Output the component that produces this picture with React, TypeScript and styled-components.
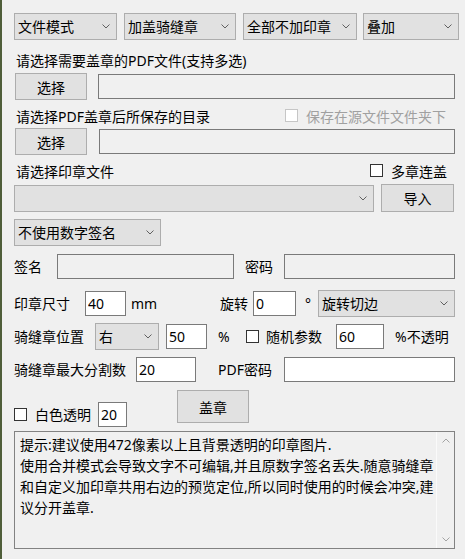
import React from 'react';
import styled, { createGlobalStyle } from 'styled-components';

const GlobalStyle = createGlobalStyle`
  html, body {
    margin: 0;
    padding: 0;
    background: #f0f0f0;
  }
  body {
    font-family: 'Noto Sans', 'Noto Sans CJK SC', sans-serif;
    font-size: 14px;
    color: #000;
  }
`;

const Page = styled.div`
  box-sizing: border-box;
  width: 465px;
  height: 559px;
  border-left: 2px solid #4f5e3a;
  padding: 13px 10px 0 12px;
  display: flex;
  flex-direction: column;
  overflow: hidden;
`;

const Row = styled.div<{ $mt: number; $h: number; $align?: string }>`
  display: flex;
  align-items: ${(p) => p.$align || 'center'};
  margin-top: ${(p) => p.$mt}px;
  height: ${(p) => p.$h}px;
  flex: none;
`;

const SplitRow = styled(Row)`
  justify-content: space-between;
`;

const Group = styled.div<{ $mr?: number; $mt?: number }>`
  display: flex;
  align-items: center;
  margin-right: ${(p) => p.$mr || 0}px;
  margin-top: ${(p) => p.$mt || 0}px;
`;

const Label = styled.span<{ $w?: number; $ml?: number; $muted?: boolean }>`
  flex: none;
  width: ${(p) => (p.$w ? `${p.$w}px` : 'auto')};
  margin-left: ${(p) => p.$ml || 0}px;
  line-height: 20px;
  white-space: nowrap;
  color: ${(p) => (p.$muted ? '#a0a0a0' : '#000')};
`;

const Combo = styled.div<{ $w: number; $ml?: number }>`
  box-sizing: border-box;
  flex: none;
  width: ${(p) => p.$w}px;
  height: 27px;
  margin-left: ${(p) => p.$ml || 0}px;
  padding: 0 6px 0 3px;
  background: #e1e1e1;
  border: 1px solid #adadad;
  display: flex;
  align-items: center;
  justify-content: space-between;
  white-space: nowrap;
  line-height: 20px;
`;

const Button = styled.button<{ $w: number; $h: number; $ml?: number; $self?: string }>`
  box-sizing: border-box;
  flex: none;
  width: ${(p) => p.$w}px;
  height: ${(p) => p.$h}px;
  margin-left: ${(p) => p.$ml || 0}px;
  align-self: ${(p) => p.$self || 'auto'};
  padding: 0;
  background: #e1e1e1;
  border: 1px solid #adadad;
  border-radius: 0;
  font: inherit;
  color: #000;
`;

const Field = styled.input<{ $w: number; $ml?: number; $ro?: boolean }>`
  box-sizing: border-box;
  flex: none;
  width: ${(p) => p.$w}px;
  height: 25px;
  margin: 0 0 0 ${(p) => p.$ml || 0}px;
  padding: 0 0 0 2px;
  background: ${(p) => (p.$ro ? '#f0f0f0' : '#fff')};
  border: 1px solid #7a7a7a;
  border-radius: 0;
  font: inherit;
  color: #000;
  outline: none;
`;

const Check = styled.span<{ $disabled?: boolean; $ml?: number; $dy?: number }>`
  box-sizing: border-box;
  flex: none;
  width: 13px;
  height: 13px;
  margin-left: ${(p) => p.$ml || 0}px;
  position: relative;
  top: ${(p) => p.$dy || 0}px;
  background: #fff;
  border: 1px solid ${(p) => (p.$disabled ? '#c6c6c6' : '#333')};
`;

const Memo = styled.div`
  box-sizing: border-box;
  flex: none;
  margin-top: 3px;
  height: 118px;
  border: 1px solid #828282;
  display: flex;
`;

const MemoText = styled.div`
  flex: 1;
  padding: 2px 0 0 5px;
  line-height: 21px;
  white-space: nowrap;
  overflow: hidden;
`;

const ScrollBar = styled.div`
  width: 17px;
  flex: none;
  border-left: 1px solid #fafafa;
  display: flex;
  flex-direction: column;
  justify-content: space-between;
`;

const ScrollArrow = styled.div`
  height: 17px;
  display: flex;
  align-items: center;
  justify-content: center;
`;

const Chevron = ({ up, color = '#606060' }: { up?: boolean; color?: string }) => (
  <svg width="8" height="5" viewBox="0 0 8 5">
    <polyline
      points={up ? '0.5,4.5 4,1 7.5,4.5' : '0.5,0.5 4,4 7.5,0.5'}
      fill="none"
      stroke={color}
      strokeWidth="1"
    />
  </svg>
);

const Select = ({ w, ml, text }: { w: number; ml?: number; text?: string }) => (
  <Combo $w={w} $ml={ml}>
    <span>{text}</span>
    <Chevron />
  </Combo>
);

export default function App() {
  return (
    <>
      <GlobalStyle />
      <Page>
        <Row $mt={0} $h={27}>
          <Select w={103} text="文件模式" />
          <Select w={112} ml={7} text="加盖骑缝章" />
          <Select w={114} ml={7} text="全部不加印章" />
          <Select w={96} ml={6} text="叠加" />
        </Row>

        <Row $mt={11} $h={20}>
          <Label $ml={2}>请选择需要盖章的PDF文件(支持多选)</Label>
        </Row>
        <Row $mt={2} $h={27}>
          <Button $w={72} $h={27} $ml={1}>选择</Button>
          <Field $w={357} $ml={11} $ro readOnly />
        </Row>

        <SplitRow $mt={7} $h={20}>
          <Label $ml={2}>请选择PDF盖章后所保存的目录</Label>
          <Group $mr={9}>
            <Check $disabled $dy={-2} />
            <Label $ml={8} $muted>保存在源文件文件夹下</Label>
          </Group>
        </SplitRow>
        <Row $mt={1} $h={27}>
          <Button $w={72} $h={27} $ml={1}>选择</Button>
          <Field $w={356} $ml={12} $ro readOnly />
        </Row>

        <SplitRow $mt={7} $h={20}>
          <Label $ml={2}>请选择印章文件</Label>
          <Group $mr={8}>
            <Check $dy={-2} />
            <Label $ml={8}>多章连盖</Label>
          </Group>
        </SplitRow>
        <Row $mt={2} $h={28} $align="flex-end">
          <Select w={360} />
          <Button $w={73} $h={28} $ml={7}>导入</Button>
        </Row>

        <Row $mt={7} $h={27}>
          <Select w={147} text="不使用数字签名" />
        </Row>

        <Row $mt={7} $h={27}>
          <Label $w={43}>签名</Label>
          <Field $w={177} $ro readOnly />
          <Label $w={39} $ml={11}>密码</Label>
          <Field $w={171} $ro readOnly />
        </Row>

        <Row $mt={10} $h={27}>
          <Label $w={71}>印章尺寸</Label>
          <Field $w={41} defaultValue="40" readOnly />
          <Label $w={89} $ml={5}>mm</Label>
          <Label $w={33}>旋转</Label>
          <Field $w={43} defaultValue="0" readOnly />
          <Label $w={13} $ml={9}>°</Label>
          <Select w={137} text="旋转切边" />
        </Row>

        <Row $mt={6} $h={27}>
          <Label $w={81}>骑缝章位置</Label>
          <Select w={64} text="右" />
          <Field $w={41} $ml={7} defaultValue="50" readOnly />
          <Label $w={28} $ml={11}>%</Label>
          <Check />
          <Label $w={70} $ml={7}>随机参数</Label>
          <Field $w={48} defaultValue="60" readOnly />
          <Label $ml={11}>%不透明</Label>
        </Row>

        <Row $mt={6} $h={27}>
          <Label $w={122}>骑缝章最大分割数</Label>
          <Field $w={60} defaultValue="20" readOnly />
          <Label $w={66} $ml={22}>PDF密码</Label>
          <Field $w={171} readOnly />
        </Row>

        <Row $mt={7} $h={38} $align="flex-start">
          <Group $mt={12}>
            <Check />
            <Label $w={63} $ml={8}>白色透明</Label>
            <Field $w={29} defaultValue="20" readOnly />
          </Group>
          <Button $w={72} $h={33} $ml={50}>盖章</Button>
        </Row>

        <Memo>
          <MemoText>
            提示:建议使用472像素以上且背景透明的印章图片.
            <br />
            使用合并模式会导致文字不可编辑,并且原数字签名丢失.随意骑缝章
            <br />
            和自定义加印章共用右边的预览定位,所以同时使用的时候会冲突,建
            <br />
            议分开盖章.
          </MemoText>
          <ScrollBar>
            <ScrollArrow>
              <Chevron up color="#a3a3a3" />
            </ScrollArrow>
            <ScrollArrow>
              <Chevron color="#a3a3a3" />
            </ScrollArrow>
          </ScrollBar>
        </Memo>
      </Page>
    </>
  );
}
